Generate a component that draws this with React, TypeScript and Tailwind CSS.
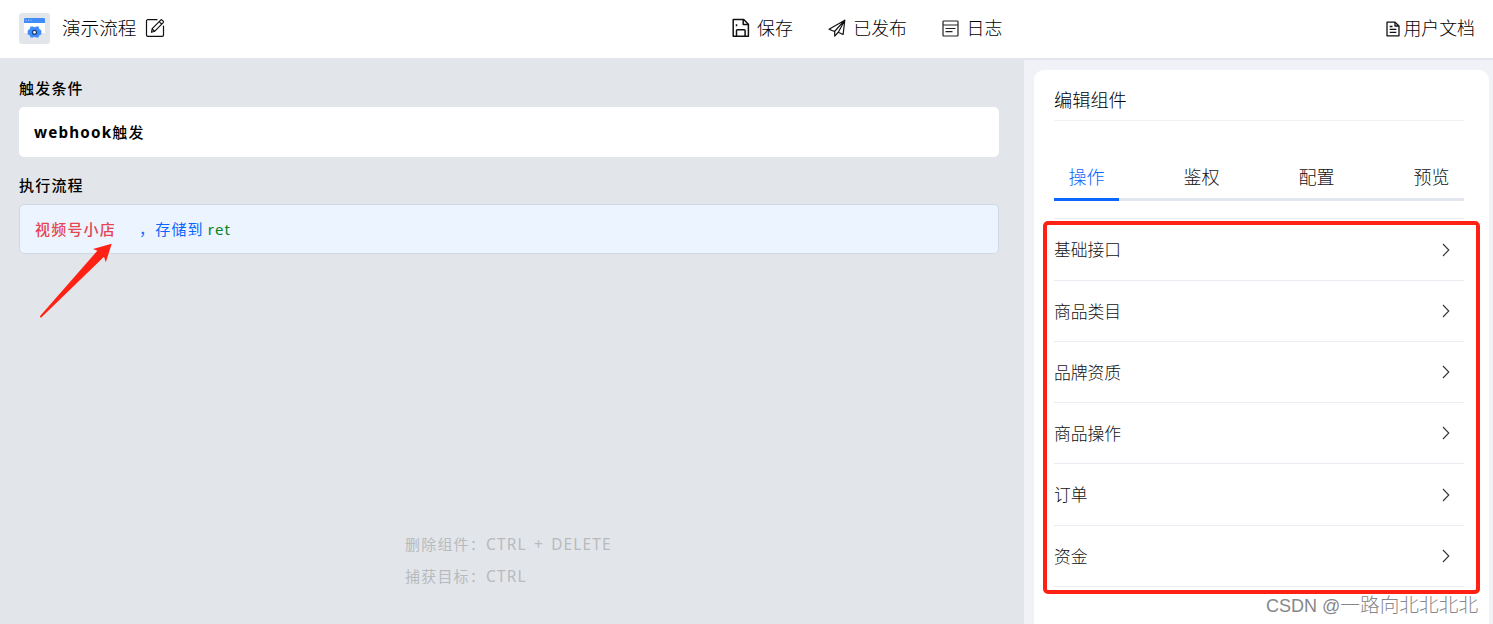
import type { ReactNode } from "react";

const categories = ["基础接口", "商品类目", "品牌资质", "商品操作", "订单", "资金"];
const tabs = ["操作", "鉴权", "配置", "预览"];

function AppLogo() {
  return (
    <div className="flex h-[31px] w-[31px] items-center justify-center rounded-[3px] bg-[#e2e6eb]">
      <svg width="31" height="31" viewBox="0 0 31 31">
        <rect x="5" y="5" width="21" height="15" rx="1" fill="#fff" />
        <path d="M5 10V6a1 1 0 0 1 1-1h19a1 1 0 0 1 1 1v4z" fill="#3f8cf8" />
        <path d="M6.500 7.200h1M9 7.200h1M11.500 7.200h1" stroke="#b9d6ff" strokeWidth="1" />
        <path d="M11.500 13.500h2.300l1.700.8 1.700-.8h2.300l.8 2.500 2 1.500v4l-2 .8-.8 2.200h-2.300l-1.700-.8-1.700.8h-2.300l-.8-2.200-2-.8v-4l2-1.500z" fill="#3f8cf8" strokeLinejoin="round" />
        <circle cx="15.500" cy="19.300" r="2" fill="#fff" stroke="#173f7c" strokeWidth="1.200" />
      </svg>
    </div>
  );
}

function EditIcon() {
  return (
    <svg width="20" height="20" viewBox="0 0 20 20" fill="none" stroke="#111" strokeWidth="1.200" strokeLinejoin="round" strokeLinecap="round">
      <path d="M12 1.700H2.800a1.300 1.300 0 0 0-1.300 1.300v14a1.300 1.300 0 0 0 1.300 1.300h14.400a1.300 1.300 0 0 0 1.300-1.300V8" />
      <path d="M6.500 14.300l.7-3.600 8.500-8.600a1 1 0 0 1 1.400 0l1.100 1.100a1 1 0 0 1 0 1.400l-8.600 8.700zM14.200 3.700l2.500 2.500M7.300 11l2.300 2.300" />
    </svg>
  );
}

function SaveIcon() {
  return (
    <svg width="18" height="20" viewBox="0 0 18 20" fill="none" stroke="#111" strokeWidth="1.500" strokeLinejoin="round">
      <path d="M1.200 1.500h10.500l4.700 4.800v12H1.200z" />
      <path d="M11.200 1.500v5h5" />
      <path d="M4.500 18.200v-5.700a.8.800 0 0 1 .8-.8h7a.8.800 0 0 1 .8.800v5.700M4.500 6.200v2" />
    </svg>
  );
}

function SendIcon() {
  return (
    <svg width="18" height="18" viewBox="0 0 18 18" fill="none" stroke="#111" strokeWidth="1.200" strokeLinejoin="round">
      <path d="M16.800 1.200L1 10.300l5.500 2.200zM16.800 1.200l-1.700 14.300-4.800-2.200zM6.700 12.500v4.700l3.300-3.700" />
    </svg>
  );
}

function LogIcon() {
  return (
    <svg width="17" height="17" viewBox="0 0 17 17" fill="none" stroke="#222" strokeWidth="1.200">
      <rect x="1" y="1" width="15" height="15" rx=".8" />
      <path d="M1 5h15M3.500 8.500h10M3.500 11.700h7" />
    </svg>
  );
}

function DocIcon() {
  return (
    <svg className="mt-px" width="14" height="16" viewBox="0 0 14 16" fill="none" stroke="#111" strokeWidth="1.300" strokeLinejoin="round">
      <path d="M1 1.200h8l4 3.800v9.800H1z" />
      <path d="M9 1.200V5h4M3.700 5.500h2.800M3.700 8.300h6.600M3.700 11.300h6.600" />
    </svg>
  );
}

function Chevron() {
  return (
    <svg className="mr-[14px]" width="8" height="14" viewBox="0 0 8 14" fill="none" stroke="#333" strokeWidth="1.100">
      <path d="M1 1l5.800 6L1 13" />
    </svg>
  );
}

function HeaderAction({ icon, label }: { icon: ReactNode; label: string }) {
  return (
    <div className="flex items-center gap-[7px]">
      {icon}
      <span className="leading-6">{label}</span>
    </div>
  );
}

function Header() {
  return (
    <header className="grid h-[58px] shrink-0 grid-cols-[732px_1fr_auto] items-center bg-white pb-[2px] pr-[18px] text-[17.900px] font-light text-black">
      <div className="flex items-center pl-[19px]">
        <AppLogo />
        <span className="ml-3 text-[18.600px] leading-6">演示流程</span>
        <span className="ml-[9px]"><EditIcon /></span>
      </div>
      <div className="flex items-center gap-[35.500px]">
        <HeaderAction icon={<SaveIcon />} label="保存" />
        <HeaderAction icon={<SendIcon />} label="已发布" />
        <HeaderAction icon={<LogIcon />} label="日志" />
      </div>
      <div className="flex items-center gap-[3px]">
        <DocIcon />
        <span className="leading-6">用户文档</span>
      </div>
    </header>
  );
}

function FlowCanvas() {
  return (
    <main className="flex w-[1024px] shrink-0 flex-col pl-[19px] pr-[25px] text-[15px] tracking-[1.200px]">
      <h2 className="mt-[18px] font-medium leading-6 text-black">触发条件</h2>
      <div className="mt-[7px] flex h-[50px] items-center rounded-[5px] bg-white pl-[15px] font-bold text-black">
        <span className="text-[15.200px]">webhook</span>
        <span className="font-medium">触发</span>
      </div>
      <h2 className="mt-[16px] font-medium leading-6 text-black">执行流程</h2>
      <div className="mt-[7px] flex h-[50px] items-center rounded-[5px] border border-[#d0d8e2] bg-[#ebf4ff] pl-[15px]">
        <span className="font-medium text-[#e6454f]">视频号小店</span>
        <span className="ml-[23px] text-[#0b66ff]">，存储到</span>
        <span className="ml-1 text-[#07811c]">ret</span>
      </div>
      <div className="mb-8 mt-auto pl-[386px] text-[#b8babc]">
        <p className="h-8 leading-8">删除组件：<span className="text-[15.400px] [word-spacing:2px]">CTRL + DELETE</span></p>
        <p className="h-8 leading-8">捕获目标：<span className="text-[15.400px]">CTRL</span></p>
      </div>
    </main>
  );
}

function EditorPanel() {
  return (
    <aside className="mt-[2px] flex grow bg-[#f0f2f7] pl-[10px] pr-1 pt-[10px]">
      <div className="grow rounded-t-[10px] bg-white pl-5 pr-[25px] font-light">
        <h1 className="flex h-[51px] items-center border-b border-[#eff1f4] pt-[11px] text-[18.200px] text-black">编辑组件</h1>
        <nav className="mt-[33px] flex h-[47px] justify-between bg-[linear-gradient(#e2e6ee,#e2e6ee)] bg-[length:100%_3px] bg-bottom bg-no-repeat text-[18px]">
          {tabs.map((tab, i) => (
            <div
              key={tab}
              className={
                i === 0
                  ? "flex w-[65px] justify-center border-b-[3px] border-[#0b66ff] pt-[11px] leading-6 text-[#0b66ff]"
                  : "flex w-[65px] justify-center pt-[11px] leading-6 text-[#111]"
              }
            >
              {tab}
            </div>
          ))}
        </nav>
        <ul className="mt-[17.400px] border-t border-[#e9ecf2] text-[16.800px] text-[#111]">
          {categories.map((name) => (
            <li key={name} className="flex h-[61.250px] items-center justify-between border-b border-[#e9ecf2]">
              <span className="pt-px">{name}</span>
              <Chevron />
            </li>
          ))}
        </ul>
      </div>
    </aside>
  );
}

export default function App() {
  return (
    <div className="relative flex h-[624px] w-[1493px] flex-col overflow-hidden bg-[#e2e6eb] font-['Noto_Sans','Noto_Sans_CJK_SC',sans-serif]">
      <Header />
      <div className="flex min-h-0 grow">
        <FlowCanvas />
        <EditorPanel />
      </div>
      <svg className="absolute left-[38px] top-[242px]" width="76" height="78" viewBox="0 0 76 78">
        <path d="M73.700 1.700L55 7l4.300 1.800L1.700 74.500l1.300 1.200L66 14.700l1.800 5.600z" fill="#ff2113" />
      </svg>
      <div className="absolute left-[1043px] top-[221px] h-[373px] w-[437px] rounded-[5px] border-4 border-[#ff2113]" />
      <div className="absolute left-[1266px] top-[592px] whitespace-nowrap text-[19.700px] font-light leading-[26px] text-[#85878a]">
        <span className="font-['Liberation_Sans',sans-serif] text-[18px]">CSDN @</span>一路向北北北北
      </div>
    </div>
  );
}
